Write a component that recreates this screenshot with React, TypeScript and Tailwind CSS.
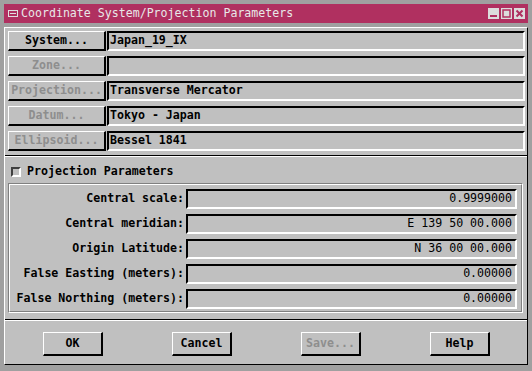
import React from "react";

// X11-style dialog: maroon title bar, #c0c0c0 body, 3D bevels drawn with
// plain 1px/2px borders (white light edge, black shadow edge).

const ROWS = [
  { label: "System...", value: "Japan_19_IX", enabled: true },
  { label: "Zone...", value: "", enabled: false },
  { label: "Projection...", value: "Transverse Mercator", enabled: false },
  { label: "Datum...", value: "Tokyo - Japan", enabled: false },
  { label: "Ellipsoid...", value: "Bessel 1841", enabled: false },
];

const PARAMS = [
  { label: "Central scale:", value: "0.9999000" },
  { label: "Central meridian:", value: "E 139 50 00.000" },
  { label: "Origin Latitude:", value: "N 36 00 00.000" },
  { label: "False Easting (meters):", value: "0.00000" },
  { label: "False Northing (meters):", value: "0.00000" },
];

const FOOTER = [
  { label: "OK", enabled: true },
  { label: "Cancel", enabled: true },
  { label: "Save...", enabled: false },
  { label: "Help", enabled: true },
];

function TitleButton({ kind }: { kind: "min" | "max" | "close" }) {
  return (
    <div className="h-[11px] w-[11px] bg-[#dcdcdc]">
      <svg width="11" height="11" viewBox="0 0 11 11" className="block">
        {kind === "min" && <rect x="2" y="7" width="7" height="2" fill="#b03060" />}
        {kind === "max" && (
          <rect x="2" y="2" width="7" height="7" fill="none" stroke="#b03060" strokeWidth="1.5" />
        )}
        {kind === "close" && (
          <path d="M2.5 2.5 L8.5 8.5 M8.5 2.5 L2.5 8.5" stroke="#b03060" strokeWidth="2" />
        )}
      </svg>
    </div>
  );
}

function Field({ value, right }: { value: string; right?: boolean }) {
  return (
    <div
      className={
        "flex h-[20px] flex-1 items-center border-t-2 border-l-2 border-b-2 border-r-2 border-t-black border-l-black border-b-white border-r-white " +
        (right ? "justify-end pr-[3px] font-normal" : "pl-[1px] font-bold")
      }
    >
      <span className="whitespace-pre leading-none">{value}</span>
    </div>
  );
}

export default function App() {
  return (
    <div className="flex h-[371px] w-[532px] flex-col bg-[#a0a0a0] pt-[4px] pr-[4px] pb-[6px] pl-[4px] font-['DejaVu_Sans_Mono',monospace] text-[11.6px] text-black">
      {/* title bar */}
      <div className="flex h-[19px] items-center bg-[#b03060] pr-[3px] pl-[4px]">
        <div className="flex h-[7px] w-[10px] items-center justify-center border border-[#e0e0e0]">
          <div className="h-[1px] w-[6px] bg-[#e0e0e0]" />
        </div>
        <span className="ml-[3px] whitespace-pre leading-none text-[#e8e8e8]">
          Coordinate System/Projection Parameters
        </span>
        <div className="ml-auto flex gap-[2px]">
          <TitleButton kind="min" />
          <TitleButton kind="max" />
          <TitleButton kind="close" />
        </div>
      </div>

      {/* body */}
      <div className="mt-[4px] flex flex-1 flex-col border-t border-l border-r border-b border-t-white border-l-white border-r-black border-b-black bg-[#c0c0c0]">
        <div className="flex flex-col gap-[5px] pt-[3px] pr-[2px] pb-[4px] pl-[3px]">
          {ROWS.map((r) => (
            <div key={r.label} className="flex h-[20px]">
              <div
                className={
                  "flex w-[98px] items-center justify-center border-t border-l border-r-2 border-b-2 border-t-white border-l-white border-r-black border-b-black font-bold " +
                  (r.enabled ? "text-black" : "text-[#8e8e8e]")
                }
              >
                <span className="leading-none">{r.label}</span>
              </div>
              <div className="ml-[1px] flex flex-1">
                <Field value={r.value} />
              </div>
            </div>
          ))}
        </div>

        <div className="h-[1px] bg-black" />
        <div className="h-[1px] bg-white" />

        <div className="flex flex-col pt-[10px] pb-[6px]">
          <div className="flex h-[10px] items-center pl-[6px]">
            <div className="h-[10px] w-[10px] border-t-2 border-l-2 border-r-2 border-b-2 border-t-[#404040] border-l-[#404040] border-r-white border-b-white bg-[#c0c0c0]" />
            <span className="ml-[6px] font-bold leading-none">Projection Parameters</span>
          </div>

          <div className="mt-[6px] mr-[4px] ml-[3px] border-t border-l border-r border-b border-t-[#808080] border-l-[#808080] border-r-white border-b-white">
            <div className="flex flex-col gap-[5px] border-t border-l border-r border-b border-t-white border-l-white border-r-[#808080] border-b-[#808080] pt-[4px] pr-[4px] pb-[2px]">
              {PARAMS.map((p) => (
                <div key={p.label} className="flex h-[20px] items-center">
                  <span className="w-[174px] text-right font-bold whitespace-pre leading-none">
                    {p.label}
                  </span>
                  <div className="ml-[2px] flex flex-1">
                    <Field value={p.value} right />
                  </div>
                </div>
              ))}
            </div>
          </div>
        </div>

        <div className="h-[1px] bg-black" />
        <div className="h-[1px] bg-white" />

        <div className="flex gap-[69px] pt-[11px] pb-[8px] pl-[38px]">
          {FOOTER.map((b) => (
            <div
              key={b.label}
              className={
                "flex h-[24px] w-[60px] items-center justify-center border-t border-l border-r-2 border-b-2 border-t-white border-l-white border-r-black border-b-black font-bold " +
                (b.enabled ? "text-black" : "text-[#8e8e8e]")
              }
            >
              <span className="leading-none">{b.label}</span>
            </div>
          ))}
        </div>
      </div>
    </div>
  );
}
